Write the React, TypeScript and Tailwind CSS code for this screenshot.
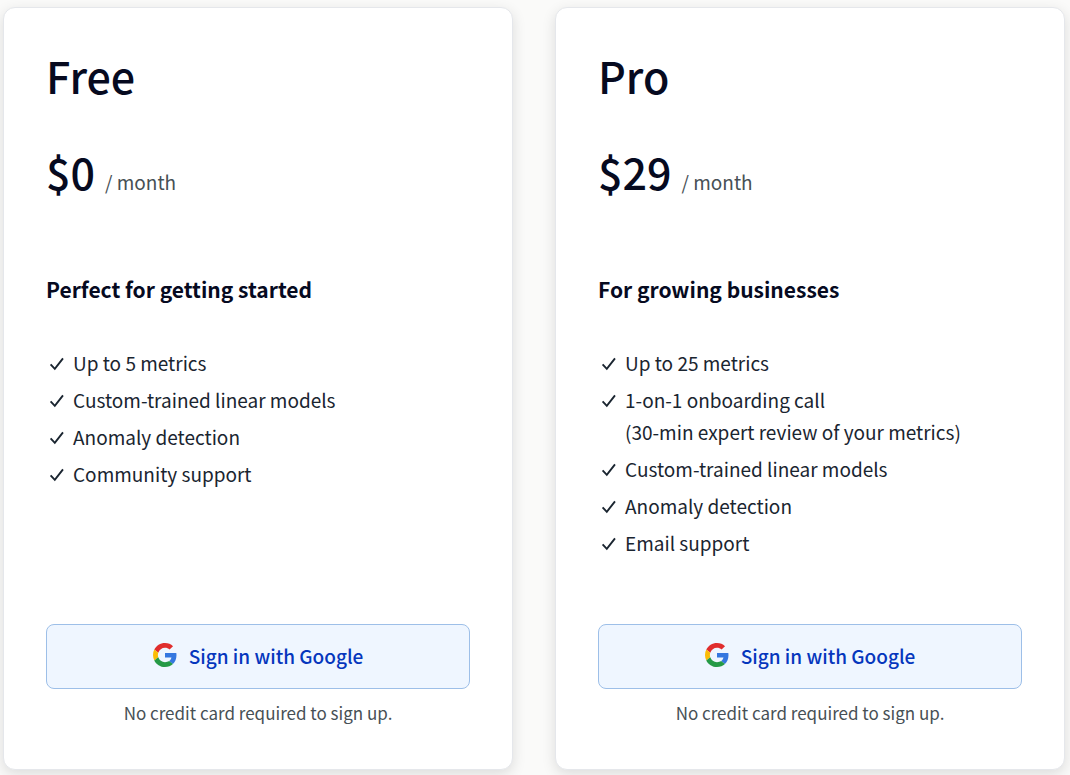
type Feature = {
  text: string;
  note?: string;
};

type Plan = {
  name: string;
  price: string;
  tagline: string;
  features: Feature[];
};

const plans: Plan[] = [
  {
    name: "Free",
    price: "$0",
    tagline: "Perfect for getting started",
    features: [
      { text: "Up to 5 metrics" },
      { text: "Custom-trained linear models" },
      { text: "Anomaly detection" },
      { text: "Community support" },
    ],
  },
  {
    name: "Pro",
    price: "$29",
    tagline: "For growing businesses",
    features: [
      { text: "Up to 25 metrics" },
      { text: "1-on-1 onboarding call", note: "(30-min expert review of your metrics)" },
      { text: "Custom-trained linear models" },
      { text: "Anomaly detection" },
      { text: "Email support" },
    ],
  },
];

const CheckIcon = () => (
  <svg
    className="mt-1.5 h-5 w-5 shrink-0"
    viewBox="0 0 20 20"
    fill="none"
    stroke="currentColor"
    strokeWidth="1.9"
    aria-hidden="true"
  >
    <path d="M4.6 11.4 L8.8 15.8 L17 5.4" />
  </svg>
);

const GoogleIcon = () => (
  <svg className="mb-1 h-6 w-6 shrink-0" viewBox="0 0 48 48" aria-hidden="true">
    <path fill="#E02D2D" d="M24 9.5c3.54 0 6.71 1.22 9.21 3.6l6.85-6.85C35.9 2.38 30.47 0 24 0 14.62 0 6.51 5.38 2.56 13.22l7.98 6.19C12.43 13.72 17.74 9.5 24 9.5z" />
    <path fill="#3577DF" d="M46.98 24.55c0-1.57-.15-3.09-.38-4.55H24v9.02h12.94c-.58 2.96-2.26 5.48-4.78 7.18l7.73 6c4.51-4.18 7.09-10.36 7.09-17.65z" />
    <path fill="#FBBC05" d="M10.53 28.59c-.48-1.45-.76-2.99-.76-4.59s.27-3.14.76-4.59l-7.98-6.19C.92 16.46 0 20.12 0 24c0 3.88.92 7.54 2.56 10.78l7.97-6.19z" />
    <path fill="#259A46" d="M24 48c6.48 0 11.93-2.13 15.89-5.81l-7.73-6c-2.15 1.45-4.92 2.3-8.16 2.3-6.26 0-11.57-4.22-13.47-9.91l-7.98 6.19C6.51 42.62 14.62 48 24 48z" />
  </svg>
);

const PlanCard = ({ plan }: { plan: Plan }) => {
  return (
    <section className="flex flex-col rounded-xl border border-gray-200 bg-white px-[42px] pt-10 pb-10 shadow-[0_4px_14px_rgba(0,0,0,0.12)]">
      <h2 className="text-[43px] leading-[54px] font-medium text-[#060a1f]">{plan.name}</h2>

      <p className="mt-[42px] flex items-baseline gap-2.5 leading-[54px]">
        <span className="text-[43px] font-medium text-[#060a1f]">{plan.price}</span>
        <span className="text-[19px] leading-8 text-[#475055]">/ month</span>
      </p>

      <h3 className="mt-[75px] text-[21px] leading-8 font-bold text-[#060a1f]">{plan.tagline}</h3>

      <ul className="mt-[42px] space-y-[5px] text-[19px] leading-8 text-[#1a2530]">
        {plan.features.map((feature) => (
          <li key={feature.text} className="flex gap-[7px]">
            <CheckIcon />
            <span>
              {feature.text}
              {feature.note && <span className="block">{feature.note}</span>}
            </span>
          </li>
        ))}
      </ul>

      <div className="mt-auto pt-[65px] text-center">
        <button
          type="button"
          className="flex h-[65px] w-full cursor-pointer items-center justify-center gap-3 rounded-lg border border-[#9dbfe8] bg-[#eff6ff] text-[19px] font-medium text-[#0536bd] hover:bg-blue-100"
        >
          <GoogleIcon />
          Sign in with Google
        </button>
        <p className="mt-2 text-[17px] leading-8 text-[#475055]">No credit card required to sign up.</p>
      </div>
    </section>
  );
};

const App = () => {
  return (
    <main className="min-h-screen bg-[#fafaf9] pt-[7px] pr-[5px] pb-[5px] pl-[3px] font-['Noto_Sans_CJK_SC',sans-serif]">
      <div className="grid grid-cols-2 gap-[42px]">
        {plans.map((plan) => (
          <PlanCard key={plan.name} plan={plan} />
        ))}
      </div>
    </main>
  );
};

export default App;
